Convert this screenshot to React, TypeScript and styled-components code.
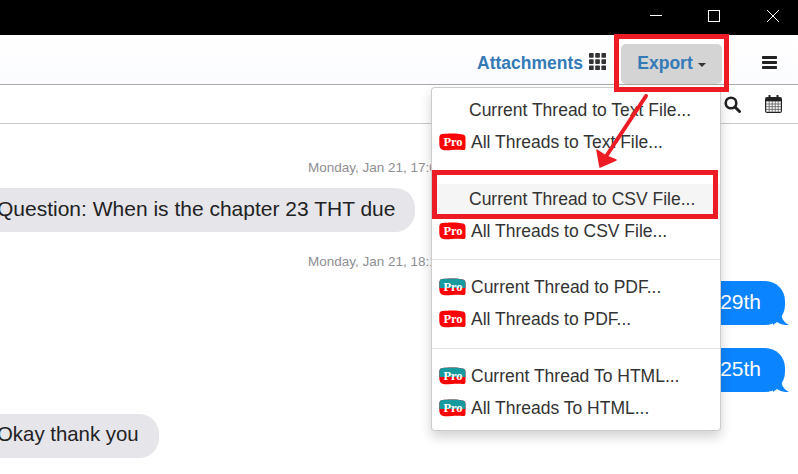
import React from "react";
import styled, { createGlobalStyle } from "styled-components";

const Global = createGlobalStyle`
  html, body { margin: 0; padding: 0; background: #fff; }
  body { font-family: "Liberation Sans", Arial, sans-serif; }
`;

const Page = styled.div`
  position: relative;
  width: 798px;
  height: 474px;
  overflow: hidden;
  background: #fff;
`;

const TitleBar = styled.div`
  height: 35px;
  background: #000;
  display: flex;
  justify-content: flex-end;
  align-items: center;
  gap: 46px;
  padding-right: 19px;
  box-sizing: border-box;
`;

const WinIcon = styled.svg<{ $nudge?: number }>`
  width: 12px;
  height: 12px;
  display: block;
  flex: none;
  margin-top: -3px;
  margin-right: ${(p) => p.$nudge ?? 0}px;
`;

const Toolbar = styled.div`
  height: 50px;
  box-sizing: border-box;
  background: linear-gradient(#ffffff, #fbfcff);
  border-bottom: 1px solid #a9a9a9;
  display: flex;
  justify-content: flex-end;
  align-items: center;
  padding-right: 21px;
`;

const AttachLabel = styled.span`
  font-size: 17.5px;
  font-weight: 700;
  color: #337ab7;
  margin-top: 7px;
`;

const GridIcon = styled.svg`
  width: 17px;
  height: 17px;
  margin: 4px 15px 0 6px;
  flex: none;
`;

const ExportButton = styled.div`
  width: 101px;
  height: 40px;
  margin-top: 8px;
  margin-right: 40px;
  box-sizing: border-box;
  border-radius: 5px;
  background: #d4d4d4;
  display: flex;
  align-items: center;
  justify-content: center;
  gap: 5px;
  font-size: 17.5px;
  font-weight: 700;
  color: #337ab7;
`;

const Caret = styled.span`
  width: 0;
  height: 0;
  margin-top: 3px;
  border-left: 4px solid transparent;
  border-right: 4px solid transparent;
  border-top: 4px solid #333;
`;

const BarsIcon = styled.svg`
  width: 15px;
  height: 13px;
  margin-top: 5px;
  flex: none;
`;

const SearchBar = styled.div`
  height: 39px;
  box-sizing: border-box;
  border-bottom: 1px solid #c8c8c8;
  display: flex;
  justify-content: flex-end;
  align-items: center;
  gap: 24px;
  padding-right: 16px;
`;

const Chat = styled.div`
  display: flex;
  flex-direction: column;
`;

const Stamp = styled.div<{ $top: number }>`
  margin-top: ${(p) => p.$top}px;
  height: 14px;
  line-height: 14px;
  font-size: 13.5px;
  color: #8e8e93;
  padding-left: 308px;
  white-space: nowrap;
`;

const LeftBubble = styled.div<{ $top: number; $size: number }>`
  align-self: flex-start;
  margin-top: ${(p) => p.$top}px;
  margin-left: -40px;
  padding: 0 20px 0 37px;
  height: 44px;
  line-height: 41px;
  border-radius: 20px;
  background: #e5e5ea;
  color: #222;
  font-size: ${(p) => p.$size}px;
  white-space: nowrap;
`;

const RightRow = styled.div<{ $top: number }>`
  align-self: flex-end;
  margin-top: ${(p) => p.$top}px;
  margin-right: 13px;
  position: relative;
  height: 44px;
`;

const RightBubble = styled.div`
  width: 200px;
  height: 44px;
  line-height: 41px;
  box-sizing: border-box;
  padding-right: 24px;
  border-radius: 20px;
  background: #0b84ff;
  color: #fff;
  font-size: 21px;
  text-align: right;
`;

const Tail = styled.svg`
  position: absolute;
  right: -4px;
  bottom: 0;
  width: 16px;
  height: 14px;
`;

const Menu = styled.div`
  position: absolute;
  left: 431px;
  top: 87px;
  width: 290px;
  height: 344px;
  box-sizing: border-box;
  padding: 7px 0;
  background: #fff;
  border: 1px solid rgba(0, 0, 0, 0.2);
  border-radius: 4px;
  box-shadow: 0 6px 12px rgba(0, 0, 0, 0.175);
`;

const Item = styled.div<{ $active?: boolean; $plain?: boolean }>`
  height: 32.25px;
  box-sizing: border-box;
  line-height: 30px;
  padding-bottom: 2px;
  display: flex;
  align-items: center;
  gap: 5px;
  padding-left: ${(p) => (p.$plain ? 37 : 7)}px;
  font-size: 17.5px;
  color: #333;
  white-space: nowrap;
  background: ${(p) => (p.$active ? "#f5f5f5" : "transparent")};
`;

const Divider = styled.div`
  height: 1px;
  margin: 11px 0 12px;
  background: #e5e5e5;
`;

const Badge = styled.svg`
  width: 27px;
  height: 18px;
  flex: none;
  display: block;
`;

const RedBox = styled.div<{ $l: number; $t: number; $w: number; $h: number }>`
  position: absolute;
  left: ${(p) => p.$l}px;
  top: ${(p) => p.$t}px;
  width: ${(p) => p.$w}px;
  height: ${(p) => p.$h}px;
  box-sizing: border-box;
  border: 5px solid #ed1c24;
  pointer-events: none;
`;

const ArrowLayer = styled.svg`
  position: absolute;
  left: 590px;
  top: 90px;
  width: 64px;
  height: 84px;
  pointer-events: none;
`;

let badgeId = 0;
const Pro = ({ two }: { two?: boolean }) => {
  const id = React.useMemo(() => `clip${badgeId++}`, []);
  const shape = "M3.5 1 C10 0 20 0.3 24 1.5 C25.8 2 26.5 3 26.5 5 L26.5 14.5 C26.5 16.5 25.5 17.3 23.5 17 C17 16 9 17.8 4 17 C1.5 16.5 0.3 14 0.3 11 L0.3 4.5 C0.3 2.5 1.5 1.2 3.5 1 Z";
  return (
    <Badge viewBox="0 0 27 18">
      <defs>
        <clipPath id={id}>
          <path d={shape} />
        </clipPath>
      </defs>
      <g clipPath={`url(#${id})`}>
        <rect width="27" height="18" fill="#fe0000" />
        {two && <rect width="27" height="10" fill="#16999f" />}
      </g>
      <text
        x="14"
        y="13"
        textAnchor="middle"
        fontFamily="'Liberation Serif', serif"
        fontWeight="700"
        fontSize="12.5"
        fill="#fff"
      >
        Pro
      </text>
    </Badge>
  );
};

const cells = [0, 6.2, 12.4];

export default function App() {
  return (
    <Page>
      <Global />
      <TitleBar>
        <WinIcon viewBox="0 0 12 12">
          <path d="M0 5.5H12" stroke="#fff" strokeWidth="1" />
        </WinIcon>
        <WinIcon viewBox="0 0 12 12" $nudge={1}>
          <rect x="0.5" y="0.5" width="11" height="11" fill="none" stroke="#fff" />
        </WinIcon>
        <WinIcon viewBox="0 0 12 12">
          <path d="M0 0L12 12M12 0L0 12" stroke="#fff" strokeWidth="1" />
        </WinIcon>
      </TitleBar>
      <Toolbar>
        <AttachLabel>Attachments</AttachLabel>
        <GridIcon viewBox="0 0 17 17">
          {cells.map((y) =>
            cells.map((x) => (
              <rect key={`${x}-${y}`} x={x} y={y} width="4.7" height="4.7" rx="0.8" fill="#333" />
            ))
          )}
        </GridIcon>
        <ExportButton>
          Export
          <Caret />
        </ExportButton>
        <BarsIcon viewBox="0 0 15 13">
          <rect y="0" width="15" height="3" rx="0.7" fill="#222" />
          <rect y="5" width="15" height="3" rx="0.7" fill="#222" />
          <rect y="10" width="15" height="3" rx="0.7" fill="#222" />
        </BarsIcon>
      </Toolbar>
      <SearchBar>
        <svg width="17" height="17" viewBox="0 0 17 17">
          <circle cx="7" cy="7" r="5.3" fill="none" stroke="#222" strokeWidth="2.6" />
          <path d="M11 11L15.5 15.5" stroke="#222" strokeWidth="3" strokeLinecap="round" />
        </svg>
        <svg width="17" height="18" viewBox="0 0 17 18">
          <rect x="0.6" y="2.6" width="15.8" height="14.8" rx="1.5" fill="#fff" stroke="#222" strokeWidth="1.2" />
          <rect x="1" y="3" width="15" height="3.4" fill="#222" />
          <path
            d="M1 9H16M1 11.7H16M1 14.4H16M4.2 6V17M7.2 6V17M10.2 6V17M13.2 6V17"
            stroke="#555"
            strokeWidth="0.8"
          />
          <path d="M4.5 0.6V4M12.5 0.6V4" stroke="#222" strokeWidth="2" strokeLinecap="round" />
        </svg>
      </SearchBar>
      <Chat>
        <Stamp $top={37}>Monday, Jan 21, 17:04</Stamp>
        <LeftBubble $top={13} $size={21}>Question: When is the chapter 23 THT due</LeftBubble>
        <Stamp $top={23}>Monday, Jan 21, 18:12</Stamp>
        <RightRow $top={12}>
          <RightBubble>29th</RightBubble>
          <Tail viewBox="0 0 16 14">
            <path d="M0 0H8C8 6 10 11 16 14C11 14.5 7 13 4 11L0 14Z" fill="#0b84ff" />
          </Tail>
        </RightRow>
        <RightRow $top={23}>
          <RightBubble>25th</RightBubble>
          <Tail viewBox="0 0 16 14">
            <path d="M0 0H8C8 6 10 11 16 14C11 14.5 7 13 4 11L0 14Z" fill="#0b84ff" />
          </Tail>
        </RightRow>
        <LeftBubble $top={22} $size={20.4}>Okay thank you</LeftBubble>
      </Chat>
      <Menu>
        <Item $plain>Current Thread to Text File...</Item>
        <Item><Pro />All Threads to Text File...</Item>
        <Divider />
        <Item $plain $active>Current Thread to CSV File...</Item>
        <Item><Pro />All Threads to CSV File...</Item>
        <Divider />
        <Item><Pro two />Current Thread to PDF...</Item>
        <Item><Pro />All Threads to PDF...</Item>
        <Divider />
        <Item><Pro two />Current Thread To HTML...</Item>
        <Item><Pro two />All Threads To HTML...</Item>
      </Menu>
      <RedBox $l={614} $t={34} $w={115} $h={58} />
      <RedBox $l={432} $t={170} $w={286} $h={49} />
      <ArrowLayer viewBox="590 90 64 84">
        <path d="M646 96L605 158" stroke="#ed1c24" strokeWidth="4" strokeLinecap="round" />
        <path d="M597 150L600 167L616 160L606 156Z" fill="#ed1c24" stroke="#ed1c24" strokeWidth="1.5" strokeLinejoin="round" />
      </ArrowLayer>
    </Page>
  );
}
